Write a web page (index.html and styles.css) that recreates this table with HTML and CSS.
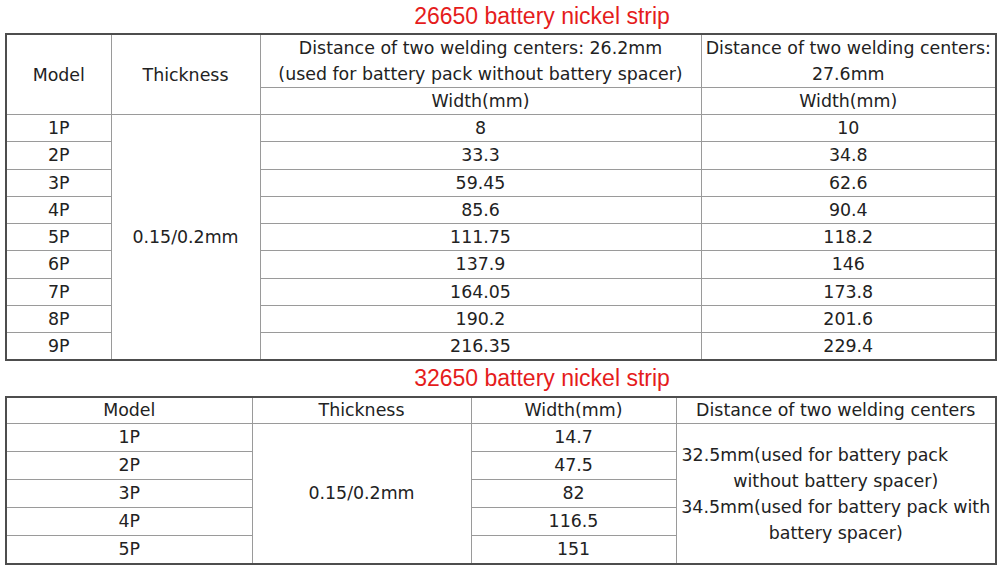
FILE: index.html
```html
<!DOCTYPE html>
<html>
<head>
<meta charset="utf-8">
<link rel="stylesheet" href="styles.css">
</head>
<body>
<div class="page">
  <h2 class="title first">26650 battery nickel strip</h2>
  <table class="spec t1">
    <colgroup>
      <col class="c1a"><col class="c1b"><col class="c1c"><col class="c1d">
    </colgroup>
    <tr class="head2">
      <td rowspan="2">Model</td>
      <td rowspan="2">Thickness</td>
      <td>Distance of two welding centers: 26.2mm<br>(used for battery pack without battery spacer)</td>
      <td>Distance of two welding centers:<br>27.6mm</td>
    </tr>
    <tr class="head1">
      <td>Width(mm)</td>
      <td>Width(mm)</td>
    </tr>
    <tr><td>1P</td><td rowspan="9">0.15/0.2mm</td><td>8</td><td>10</td></tr>
    <tr><td>2P</td><td>33.3</td><td>34.8</td></tr>
    <tr><td>3P</td><td>59.45</td><td>62.6</td></tr>
    <tr><td>4P</td><td>85.6</td><td>90.4</td></tr>
    <tr><td>5P</td><td>111.75</td><td>118.2</td></tr>
    <tr><td>6P</td><td>137.9</td><td>146</td></tr>
    <tr><td>7P</td><td>164.05</td><td>173.8</td></tr>
    <tr><td>8P</td><td>190.2</td><td>201.6</td></tr>
    <tr><td>9P</td><td>216.35</td><td>229.4</td></tr>
  </table>
  <h2 class="title second">32650 battery nickel strip</h2>
  <table class="spec t2">
    <colgroup>
      <col class="c2a"><col class="c2b"><col class="c2c"><col class="c2d">
    </colgroup>
    <tr class="head">
      <td>Model</td><td>Thickness</td><td>Width(mm)</td><td>Distance of two welding centers</td>
    </tr>
    <tr><td>1P</td><td rowspan="5">0.15/0.2mm</td><td>14.7</td>
      <td rowspan="5" class="dist">
        <span class="ln lead">32.5mm(used for battery pack</span>
        <span class="ln">without battery spacer)</span>
        <span class="ln">34.5mm(used for battery pack with</span>
        <span class="ln">battery spacer)</span>
      </td>
    </tr>
    <tr><td>2P</td><td>47.5</td></tr>
    <tr><td>3P</td><td>82</td></tr>
    <tr><td>4P</td><td>116.5</td></tr>
    <tr><td>5P</td><td>151</td></tr>
  </table>
</div>
</body>
</html>
```

FILE: styles.css
```css
html, body {
  margin: 0;
  padding: 0;
  background: #ffffff;
}

.page {
  padding-left: 5px;
  width: 990px;
}

.title {
  margin: 0;
  padding-left: 84px;
  font-family: "Liberation Sans", Arial, sans-serif;
  font-weight: normal;
  font-size: 23px;
  color: #e51c1c;
  text-align: center;
}

.title.first {
  line-height: 33px;
}

.title.second {
  line-height: 35px;
}

.spec {
  border-collapse: collapse;
  table-layout: fixed;
  width: 990px;
  border: 2px solid #4d4d4d;
  font-family: "DejaVu Sans", Verdana, sans-serif;
  font-size: 17.4px;
  color: #222222;
}

.spec td {
  border: 1px solid #9a9a9a;
  padding: 0;
  text-align: center;
  vertical-align: middle;
  white-space: nowrap;
}

.t1 td {
  line-height: 26.25px;
}

.t1 .head2 td {
  line-height: 26px;
}

.t1 .head1 td {
  line-height: 26px;
}

.t2 td {
  line-height: 27px;
}

.t2 .head td {
  line-height: 25px;
}

.c1a { width: 105px; }
.c1b { width: 149px; }
.c1c { width: 441px; }
.c1d { width: 295px; }

.c2a { width: 246px; }
.c2b { width: 219px; }
.c2c { width: 205px; }
.c2d { width: 320px; }

.dist .ln {
  display: block;
  line-height: 26px;
}

.dist .lead {
  text-align: left;
  padding-left: 5px;
}
```
